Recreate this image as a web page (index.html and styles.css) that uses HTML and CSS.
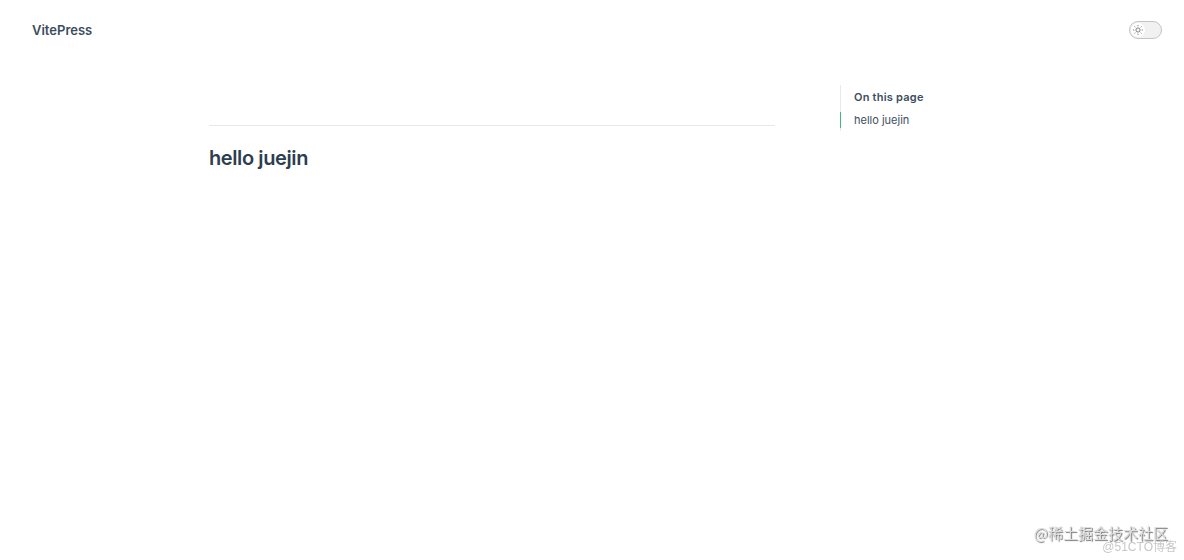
FILE: index.html
```html
<!DOCTYPE html>
<html lang="en">
<head>
  <meta charset="UTF-8">
  <meta name="viewport" content="width=device-width, initial-scale=1.0">
  <title>VitePress</title>
  <link rel="stylesheet" href="styles.css">
</head>
<body>
  <header class="nav">
    <a class="title" href="#">VitePress</a>
    <button class="switch" type="button" role="switch" aria-checked="false" aria-label="Toggle dark mode">
      <span class="check">
        <svg class="sun" viewBox="0 0 24 24" aria-hidden="true">
          <circle cx="12" cy="12" r="5"/>
          <path d="M12 0v3M12 21v3M0 12h3M21 12h3M3.5 3.5l2.2 2.2M18.3 18.3l2.2 2.2M3.5 20.5l2.2-2.2M18.3 5.7l2.2-2.2"/>
        </svg>
      </span>
    </button>
  </header>

  <div class="container">
    <main class="doc">
      <h2 id="hello-juejin">hello juejin</h2>
    </main>

    <aside class="aside">
      <nav class="outline" aria-labelledby="outline-title">
        <div class="outline-title" id="outline-title">On this page</div>
        <a class="outline-link active" href="#hello-juejin">hello juejin</a>
      </nav>
    </aside>
  </div>

  <!-- Watermarks -->
  <div class="mark mark-juejin" lang="zh">@稀土掘金技术社区</div>
  <div class="mark mark-51cto" lang="zh">@51CTO博客</div>
</body>
</html>
```

FILE: styles.css
```css
body {
  margin: 0;
  font-family: Inter, "Noto Sans CJK SC", sans-serif;
  background-color: #fff;
  color: #2c3e50;
}

a {
  color: inherit;
  text-decoration: none;
}

.nav {
  display: flex;
  align-items: center;
  justify-content: space-between;
  height: 60px;
  padding: 0 22px 0 32px;
}

.title {
  font-size: 13px;
  font-weight: 600;
  color: #3c4d5e;
}

.switch {
  box-sizing: border-box;
  width: 33px;
  height: 18px;
  padding: 1px;
  border: 1px solid #c4c4c4;
  border-radius: 9px;
  background-color: #f1f1f1;
  cursor: pointer;
}

.check {
  display: flex;
  align-items: center;
  justify-content: center;
  width: 14px;
  height: 14px;
  border-radius: 50%;
  background-color: #fff;
}

.sun {
  width: 10px;
  height: 10px;
  fill: none;
  stroke: #666;
  stroke-width: 2;
}

.container {
  display: grid;
  grid-template-columns: minmax(0, 1fr) 184px;
  column-gap: 65px;
  align-items: start;
  padding: 25px 160px 0 209px;
}

.doc h2 {
  margin: 40px 0 0;
  padding-top: 20px;
  border-top: 1px solid #e8e8e8;
  font-size: 20px;
  font-weight: 600;
  line-height: 24px;
  letter-spacing: -0.02em;
}

.outline {
  padding: 0 0 3px 13px;
  border-left: 1px solid #e8e8e8;
  font-size: 11px;
  color: #3c4d5e;
}

.outline-title {
  padding-bottom: 3px;
  font-weight: 600;
  line-height: 24px;
  letter-spacing: 0.02em;
}

.outline-link {
  display: block;
  margin-left: -14px;
  padding-left: 13px;
  border-left: 1px solid transparent;
  line-height: 16px;
}

.outline-link.active {
  border-left-color: #42b883;
}

/* Watermarks */
.mark {
  position: fixed;
  white-space: nowrap;
}

.mark-juejin {
  right: 16px;
  bottom: 16px;
  font-family: "Noto Sans CJK SC", sans-serif;
  font-size: 15px;
  line-height: 22px;
  color: #ddd;
  text-shadow: 1px 1px 1px #777;
}

.mark-51cto {
  right: 7px;
  bottom: 5px;
  font-family: "Liberation Sans", "Noto Sans CJK SC", sans-serif;
  font-size: 12px;
  line-height: 16px;
  color: #c8c8c8;
}
```
